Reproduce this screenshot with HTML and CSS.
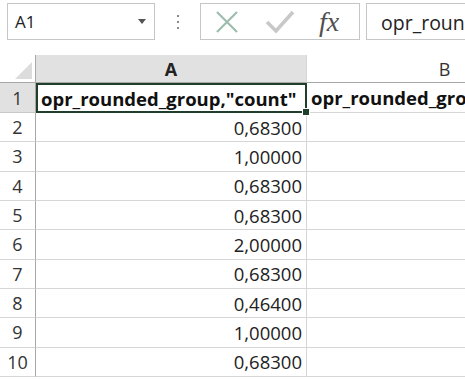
FILE: index.html
```html
<!DOCTYPE html>
<html lang="en">
<head>
    <meta charset="UTF-8">
    <title>Sheet</title>
    <link rel="stylesheet" href="styles.css">
</head>
<body>
    <div class="formula-bar">
        <div class="name-box">
            <span>A1</span>
            <span class="arrow"></span>
        </div>
        <div class="dots"><i></i><i></i><i></i></div>
        <div class="buttons">
            <svg class="icon" width="26" height="26" viewBox="0 0 26 26">
                <path d="M3 3 L23 23 M23 3 L3 23" stroke="#9fbdae" stroke-width="2.2" fill="none"/>
            </svg>
            <svg class="icon" width="30" height="26" viewBox="0 0 30 26">
                <path d="M2 13 L11 22 L28 3" stroke="#c8c8c8" stroke-width="3.6" fill="none"/>
            </svg>
            <span class="fx">fx</span>
        </div>
        <div class="formula-input">opr_rounded_group,"count"</div>
    </div>

    <div class="sheet">
        <div class="row head-row">
            <div class="rh corner"><span class="tri"></span></div>
            <div class="ch col-a sel">A</div>
            <div class="ch col-b">B</div>
        </div>
        <div class="row first">
            <div class="rh sel">1</div>
            <div class="cell col-a bold active">opr_rounded_group,"count"<span class="handle"></span></div>
            <div class="cell col-b bold">opr_rounded_group</div>
        </div>
        <div class="row"><div class="rh">2</div><div class="cell col-a num">0,68300</div><div class="cell col-b"></div></div>
        <div class="row"><div class="rh">3</div><div class="cell col-a num">1,00000</div><div class="cell col-b"></div></div>
        <div class="row"><div class="rh">4</div><div class="cell col-a num">0,68300</div><div class="cell col-b"></div></div>
        <div class="row"><div class="rh">5</div><div class="cell col-a num">0,68300</div><div class="cell col-b"></div></div>
        <div class="row"><div class="rh">6</div><div class="cell col-a num">2,00000</div><div class="cell col-b"></div></div>
        <div class="row"><div class="rh">7</div><div class="cell col-a num">0,68300</div><div class="cell col-b"></div></div>
        <div class="row"><div class="rh">8</div><div class="cell col-a num">0,46400</div><div class="cell col-b"></div></div>
        <div class="row"><div class="rh">9</div><div class="cell col-a num">1,00000</div><div class="cell col-b"></div></div>
        <div class="row"><div class="rh">10</div><div class="cell col-a num">0,68300</div><div class="cell col-b"></div></div>
    </div>
</body>
</html>
```

FILE: styles.css
```css
body {
    margin: 0;
    font-family: "Open Sans", sans-serif;
    color: #222;
    background: #fff;
    overflow: hidden;
    width: 465px;
    height: 380px;
}
.formula-bar {
    display: flex;
    align-items: center;
    padding: 3px 0 0 7px;
    height: 37px;
    white-space: nowrap;
}
.name-box {
    box-sizing: border-box;
    width: 148px;
    height: 37px;
    border: 1px solid #c6c6c6;
    display: flex;
    align-items: center;
    justify-content: space-between;
    padding: 0 8px 0 7px;
    font-size: 17px;
}
.arrow {
    width: 0;
    height: 0;
    border-left: 4px solid transparent;
    border-right: 4px solid transparent;
    border-top: 5px solid #555;
}
.dots {
    width: 45px;
    display: flex;
    flex-direction: column;
    align-items: center;
    gap: 4px;
}
.dots i {
    width: 2px;
    height: 2px;
    background: #8a8a8a;
}
.buttons {
    box-sizing: border-box;
    width: 160px;
    height: 37px;
    border: 1px solid #c6c6c6;
    display: flex;
    align-items: center;
    padding-left: 13px;
    gap: 25px;
}
.fx {
    font-family: "Liberation Serif", serif;
    font-style: italic;
    font-size: 28px;
    color: #505050;
    margin-left: -1px;
}
.formula-input {
    box-sizing: border-box;
    margin-left: 6px;
    flex: 1;
    height: 37px;
    border: 1px solid #c6c6c6;
    border-right: none;
    padding: 5px 0 0 14px;
    font-size: 19.5px;
    overflow: hidden;
}
.sheet {
    margin-top: 15px;
}
.row {
    display: flex;
    height: 29.33px;
}
.head-row {
    height: 28px;
}
.row.first {
    height: 30px;
}
.rh {
    box-sizing: border-box;
    width: 36px;
    flex: none;
    border-right: 1px solid #a8a8a8;
    border-bottom: 1px solid #d6d6d6;
    display: flex;
    align-items: center;
    justify-content: center;
    font-size: 18px;
    color: #333;
}
.rh.sel {
    background: #e1e1e1;
    border-bottom-color: #c8c8c8;
}
.corner {
    position: relative;
    border-bottom-color: #a8a8a8;
}
.tri {
    position: absolute;
    right: 3px;
    bottom: 3px;
    width: 0;
    height: 0;
    border-left: 17px solid transparent;
    border-bottom: 17px solid #dcdcdc;
}
.ch {
    box-sizing: border-box;
    flex: none;
    border-bottom: 1px solid #a8a8a8;
    border-right: 1px solid #d6d6d6;
    display: flex;
    align-items: center;
    justify-content: center;
    font-size: 18px;
    color: #333;
}
.ch.sel {
    background: #e1e1e1;
    font-weight: bold;
    color: #222;
}
.col-a {
    width: 271px;
}
.col-b {
    width: 276px;
}
.cell {
    box-sizing: border-box;
    flex: none;
    border-right: 1px solid #d6d6d6;
    border-bottom: 1px solid #d6d6d6;
    display: flex;
    align-items: center;
    padding: 0 4px;
    font-size: 18.5px;
    white-space: nowrap;
}
.num {
    justify-content: flex-end;
}
.bold {
    font-weight: bold;
    color: #111;
}
.active {
    position: relative;
    border: 2px solid #1f3f2c;
    padding-left: 3px;
}
.handle {
    position: absolute;
    right: -5px;
    bottom: -5px;
    width: 6px;
    height: 6px;
    background: #1f3f2c;
    border: 1px solid #fff;
}
```
